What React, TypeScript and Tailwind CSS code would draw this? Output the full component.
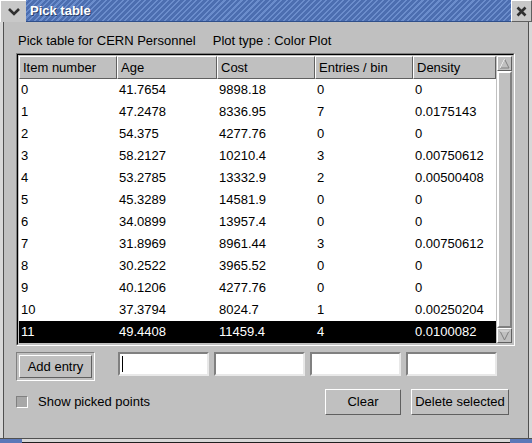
import React from "react";

const rows = [
  ["0", "41.7654", "9898.18", "0", "0"],
  ["1", "47.2478", "8336.95", "7", "0.0175143"],
  ["2", "54.375", "4277.76", "0", "0"],
  ["3", "58.2127", "10210.4", "3", "0.00750612"],
  ["4", "53.2785", "13332.9", "2", "0.00500408"],
  ["5", "45.3289", "14581.9", "0", "0"],
  ["6", "34.0899", "13957.4", "0", "0"],
  ["7", "31.8969", "8961.44", "3", "0.00750612"],
  ["8", "30.2522", "3965.52", "0", "0"],
  ["9", "40.1206", "4277.76", "0", "0"],
  ["10", "37.3794", "8024.7", "1", "0.00250204"],
  ["11", "49.4408", "11459.4", "4", "0.0100082"],
];

const headers = ["Item number", "Age", "Cost", "Entries / bin", "Density"];
const widths = ["w-[98px]", "w-[100px]", "w-[98px]", "w-[98px]", "w-[83px]"];

function Raised({ className, children }: { className?: string; children?: React.ReactNode }) {
  return (
    <div className={`border border-t-white border-l-white border-b-[#606060] border-r-[#606060] bg-[#c0c0c0] ${className ?? ""}`}>
      {children}
    </div>
  );
}

function Input({ cursor }: { cursor?: boolean }) {
  return (
    <div className="w-[91px] h-[24px] border-2 border-t-[#808080] border-l-[#808080] border-b-[#e8e8e8] border-r-[#e8e8e8] bg-white flex items-center pl-[2px]">
      {cursor && <div className="w-px h-[16px] bg-black" />}
    </div>
  );
}

export default function App() {
  return (
    <div className="w-[532px] h-[443px] bg-[#c0c0c0] flex flex-col text-[13px] text-black font-['Liberation_Sans',Arial,sans-serif] overflow-hidden">
      {/* title bar */}
      <div className="h-[22px] flex shrink-0">
        <div className="w-[26px] bg-[#c8c8c8] border-t border-l border-white flex items-center justify-center">
          <svg width="12" height="8" viewBox="0 0 12 8">
            <path d="M1 1 L6 6 L11 1" fill="none" stroke="#303030" strokeWidth="2.6" />
          </svg>
        </div>
        <div className="flex-1 flex items-center pl-[4px] border-b border-[#2f4f8a] bg-[repeating-linear-gradient(135deg,#6b8dcc_0px,#6b8dcc_1.5px,#4c6eb0_1.5px,#4c6eb0_4px)]">
          <span className="text-white font-bold text-[13px] leading-none [text-shadow:1px_1px_0_#2a3f6a]">Pick table</span>
        </div>
        <div className="w-[21px] bg-[#c8c8c8] border border-t-white border-l-white border-b-[#606060] border-r-[#606060] flex items-center justify-center">
          <svg width="11" height="11" viewBox="0 0 11 11">
            <path d="M1.5 1.5 L9.5 9.5 M9.5 1.5 L1.5 9.5" stroke="#303030" strokeWidth="2.6" />
          </svg>
        </div>
      </div>

      {/* body */}
      <div className="flex-1 flex border-l-[3px] border-r-[3px] border-l-[#d8d8d8] border-r-[#d8d8d8]">
        <div className="flex-1 flex flex-col border-l border-r border-[#505050] pl-[12px] pr-[13px]">
          <div className="h-[31px] flex items-end pb-[3px] pl-[2px] gap-[17px]">
            <span>Pick table for CERN Personnel</span>
            <span>Plot type : Color Plot</span>
          </div>

          {/* table */}
          <div className="w-[499px] border border-t-[#808080] border-l-[#808080] border-b-white border-r-white">
            <div className="flex border border-t-black border-l-black border-b-[#c0c0c0] border-r-[#c0c0c0] p-px">
              <div className="w-[477px] bg-white flex flex-col">
                <div className="flex bg-[#c0c0c0]">
                  {headers.map((h, i) => (
                    <Raised key={h} className={`${widths[i]} h-[23px] flex items-center pl-[3px]`}>
                      {h}
                    </Raised>
                  ))}
                </div>
                {rows.map((r, ri) => {
                  const sel = ri === rows.length - 1;
                  return (
                    <div key={ri} className={`flex h-[22px] items-center ${sel ? "bg-black text-white" : ""}`}>
                      {r.map((c, ci) => (
                        <div key={ci} className={`${widths[ci]} pl-[2px]`}>
                          {c}
                        </div>
                      ))}
                    </div>
                  );
                })}
              </div>
              {/* scrollbar */}
              <div className="w-[17px] ml-px bg-[#b0b0b0] flex flex-col">
                <Raised className="h-[15px] flex items-center justify-center">
                  <svg width="11" height="11" viewBox="0 0 11 11">
                    <path d="M5.5 1 L10 10 L1 10 Z" fill="#c0c0c0" stroke="#808080" />
                    <path d="M5.5 1 L1 10" stroke="#ffffff" />
                  </svg>
                </Raised>
                <Raised className="flex-1 border-2 border-t-white border-l-white border-b-[#808080] border-r-[#808080]" />
                <Raised className="h-[15px] flex items-center justify-center">
                  <svg width="11" height="11" viewBox="0 0 11 11">
                    <path d="M5.5 10 L10 1 L1 1 Z" fill="#c0c0c0" stroke="#808080" />
                    <path d="M1 1 L10 1" stroke="#ffffff" />
                  </svg>
                </Raised>
              </div>
            </div>
          </div>

          {/* entry row */}
          <div className="flex items-start mt-[6px]">
            <div className="w-[79px] h-[29px] border border-t-[#808080] border-l-[#808080] border-b-white border-r-white p-[2px]">
              <Raised className="h-full flex items-center justify-center">Add entry</Raised>
            </div>
            <div className="flex gap-[5px] ml-[23px]">
              <Input cursor />
              <Input />
              <Input />
              <Input />
            </div>
          </div>

          {/* bottom row */}
          <div className="flex items-center mt-[8px]">
            <div className="w-[12px] h-[12px] bg-[#a8a8a8] border border-t-[#808080] border-l-[#808080] border-b-white border-r-white" />
            <span className="ml-[10px]">Show picked points</span>
            <div className="flex-1" />
            <Raised className="w-[76px] h-[26px] flex items-center justify-center">Clear</Raised>
            <Raised className="w-[98px] h-[26px] flex items-center justify-center ml-[10px] mr-[6px]">Delete selected</Raised>
          </div>
        </div>
      </div>

      {/* bottom frame */}
      <div className="h-[5px] flex shrink-0 border-t border-[#505050] bg-[#d8d8d8]">
        <div className="w-[22px] bg-[#5b78b8]" />
        <div className="flex-1 border-b border-[#202020]" />
        <div className="w-[22px] bg-[#5b78b8]" />
      </div>
    </div>
  );
}
